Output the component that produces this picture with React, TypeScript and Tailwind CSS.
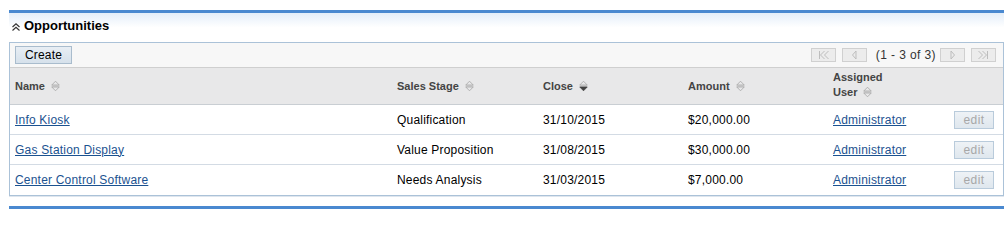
import React from "react";

const SortIcon = ({ active = false }: { active?: boolean }) => (
  <svg width="9" height="12" viewBox="0 0 9 12" className="inline-block ml-[6px] align-[-2px]">
    <path d="M0.8 5 L4.5 1.2 L8.2 5 Z" fill="none" stroke="#a6a6a6" strokeWidth="0.8" />
    <line x1="0.5" y1="6" x2="8.5" y2="6" stroke="#b0b0b0" strokeWidth="0.8" />
    {active ? (
      <path d="M0.8 7 L4.5 10.8 L8.2 7 Z" fill="#444" stroke="#444" strokeWidth="0.8" />
    ) : (
      <path d="M0.8 7 L4.5 10.8 L8.2 7 Z" fill="none" stroke="#a6a6a6" strokeWidth="0.8" />
    )}
  </svg>
);

const PageBtn = ({ kind }: { kind: "first" | "prev" | "next" | "last" }) => (
  <div className="w-[25px] h-[14px] border border-[#d0d0d0] bg-[#ececec] flex items-center justify-center">
    <svg width="13" height="10" viewBox="0 0 13 10">
      {kind === "first" && (
        <g fill="none" stroke="#bdbdbd" strokeWidth="1">
          <line x1="2.5" y1="1" x2="2.5" y2="9" />
          <path d="M7.5 1 L3.5 5 L7.5 9" />
          <path d="M11.5 1 L7.5 5 L11.5 9" />
        </g>
      )}
      {kind === "prev" && (
        <g fill="none" stroke="#bdbdbd" strokeWidth="1">
          <path d="M8 1 L4.5 5 L8 9 Z" />
        </g>
      )}
      {kind === "next" && (
        <g fill="none" stroke="#bdbdbd" strokeWidth="1">
          <path d="M5 1 L8.5 5 L5 9 Z" />
        </g>
      )}
      {kind === "last" && (
        <g fill="none" stroke="#bdbdbd" strokeWidth="1">
          <path d="M1.5 1 L5.5 5 L1.5 9" />
          <path d="M5.5 1 L9.5 5 L5.5 9" />
          <line x1="10.5" y1="1" x2="10.5" y2="9" />
        </g>
      )}
    </svg>
  </div>
);

const rows = [
  { name: "Info Kiosk", stage: "Qualification", close: "31/10/2015", amount: "$20,000.00" },
  { name: "Gas Station Display", stage: "Value Proposition", close: "31/08/2015", amount: "$30,000.00" },
  { name: "Center Control Software", stage: "Needs Analysis", close: "31/03/2015", amount: "$7,000.00" },
];

const cols = "grid grid-cols-[382px_146px_145px_145px_120px_1fr]";

export default function App() {
  return (
    <div
      className="w-[1008px] h-[210px] bg-white overflow-hidden pl-[9px] pr-[4px] pt-[10px] text-black"
      style={{ fontFamily: '"Liberation Sans", Arial, sans-serif' }}
    >
      <div className="h-[3px] bg-[#4a89d0]" />
      <div className="h-[29px] bg-gradient-to-b from-[#e4eef9] via-white to-white flex items-start pt-[5px] pl-[2px]">
        <svg width="10" height="10" viewBox="0 0 10 10" className="mt-[4px]">
          <g fill="none" stroke="#333" strokeWidth="1.2">
            <path d="M1.5 5 L5 1.8 L8.5 5" />
            <path d="M1.5 8.5 L5 5.3 L8.5 8.5" />
          </g>
        </svg>
        <span className="ml-[3px] text-[13px] font-bold leading-[16px]">Opportunities</span>
      </div>
      <div className="border border-[#abc2d8] shadow-[0_1px_0_#dfe6ee]">
        <div className="h-[25px] bg-[#f7f7f7] border-b border-[#cfcfcf] flex items-center pl-[5px] pr-[7px]">
          <button className="w-[57px] h-[18px] border border-[#a9bccd] bg-gradient-to-b from-[#e8eef4] to-[#d6e1eb] text-[12px] leading-[16px] text-black tracking-[0.2px]">
            Create
          </button>
          <div className="ml-auto flex items-center">
            <PageBtn kind="first" />
            <div className="w-[6px]" />
            <PageBtn kind="prev" />
            <span className="text-[12px] text-[#333] ml-[9px] mr-[4px] leading-[14px] tracking-[0.4px]">(1 - 3 of 3)</span>
            <PageBtn kind="next" />
            <div className="w-[6px]" />
            <PageBtn kind="last" />
          </div>
        </div>
        <div className={`${cols} h-[37px] bg-[#e8e8e9] border-b border-[#c9ced3] items-center text-[11px] font-bold text-[#444] leading-[15px]`}>
          <div className="pl-[5px]">
            Name
            <SortIcon />
          </div>
          <div className="pl-[5px]">
            Sales Stage
            <SortIcon />
          </div>
          <div className="pl-[5px]">
            Close
            <SortIcon active />
          </div>
          <div className="pl-[5px]">
            Amount
            <SortIcon />
          </div>
          <div className="pl-[5px] -mt-[2px]">
            Assigned
            <br />
            User
            <SortIcon />
          </div>
          <div />
        </div>
        {rows.map((r, i) => (
          <div
            key={r.name}
            className={`${cols} h-[30px] items-center text-[12px] bg-white tracking-[0.2px] ${i < rows.length - 1 ? "border-b border-[#d3dbe4]" : ""}`}
          >
            <div className="pl-[5px]">
              <a href="#" className="text-[#1b5290] underline">
                {r.name}
              </a>
            </div>
            <div className="pl-[5px]">{r.stage}</div>
            <div className="pl-[5px]">{r.close}</div>
            <div className="pl-[5px]">{r.amount}</div>
            <div className="pl-[5px]">
              <a href="#" className="text-[#1b5290] underline">
                Administrator
              </a>
            </div>
            <div className="pl-[6px]">
              <button className="w-[40px] h-[18px] border border-[#b9cbdb] bg-gradient-to-b from-[#eef2f6] to-[#dfe7ee] text-[12px] leading-[16px] text-[#a8a8a8] tracking-[0.4px]">
                edit
              </button>
            </div>
          </div>
        ))}
      </div>
      <div className="h-[10px]" />
      <div className="h-[3px] bg-[#4a89d0]" />
    </div>
  );
}
